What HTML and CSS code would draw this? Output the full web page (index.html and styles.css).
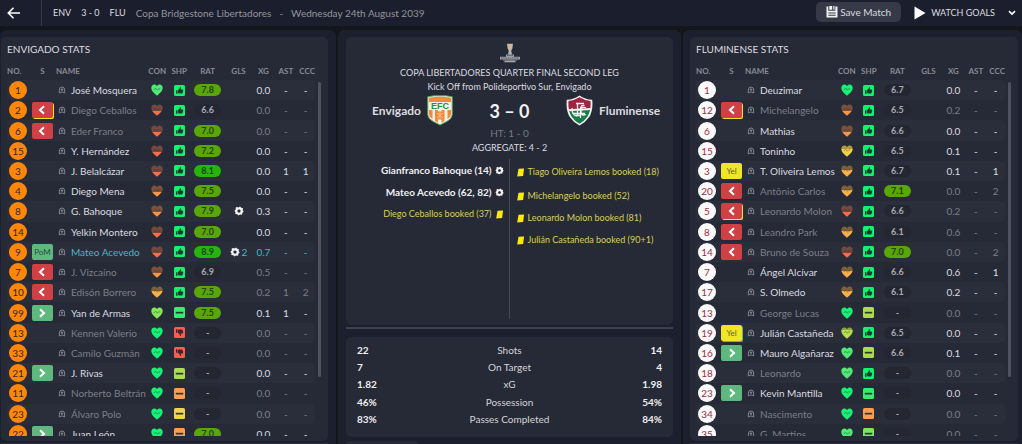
FILE: index.html
```html
<!DOCTYPE html>
<html lang="en">
<head>
<meta charset="utf-8">
<meta name="viewport" content="width=device-width, initial-scale=1">
<title>Envigado 3 - 0 Fluminense</title>
<link rel="stylesheet" href="styles.css">
</head>
<body>
<svg class="sprites" aria-hidden="true">
  <defs>
    <linearGradient id="fill-red" x1="0" y1="0" x2="0" y2="1"><stop offset=".6" stop-color="#72483f"/><stop offset=".6" stop-color="#fb6d49"/></linearGradient>
    <linearGradient id="fill-orange" x1="0" y1="0" x2="0" y2="1"><stop offset=".54" stop-color="#7a523c"/><stop offset=".54" stop-color="#fb9445"/></linearGradient>
    <linearGradient id="fill-amber" x1="0" y1="0" x2="0" y2="1"><stop offset=".42" stop-color="#7c6138"/><stop offset=".42" stop-color="#fbb047"/></linearGradient>
    <linearGradient id="fill-yellow" x1="0" y1="0" x2="0" y2="1"><stop offset=".3" stop-color="#b09a3a"/><stop offset=".3" stop-color="#f2d247"/></linearGradient>
    <linearGradient id="fill-lime" x1="0" y1="0" x2="0" y2="1"><stop offset=".25" stop-color="#8aa53f"/><stop offset=".25" stop-color="#b3df4c"/></linearGradient>
  </defs>
  <symbol id="heart" viewBox="0 0 12 12">
    <path d="M6 11.8C4.900 10.500.3 7.500.3 3.900.3 1.800 1.600.4 3.300.4 4.500.4 5.500 1.100 6 2.100 6.500 1.100 7.500.4 8.700.4c1.700 0 3 1.400 3 3.500C11.700 7.500 7.100 10.500 6 11.800z"/>
    <path d="M2.800 5.300h1l1-1 1.500 1.800 1.200-1.100h1.700" fill="none" stroke="#262936" stroke-opacity=".55" stroke-width=".8"/>
  </symbol>
  <symbol id="up" viewBox="0 0 11 11">
    <rect width="11" height="11" rx="1.500"/>
    <path fill="#1b3a35" d="M2 5.200h1.500v3.500H2zM4 5l1.600-1.200.4-1.900c.9-.1 1.300.7 1 1.500l-.3 1.100h1.800c.9 0 .8 1 .4 1.100.5.300.300 1-.1 1.100.3.400.1.900-.4 1 .1.600-.3.900-.8.900H5.200L4 8.100z"/>
  </symbol>
  <symbol id="down" viewBox="0 0 11 11">
    <rect width="11" height="11" rx="1.500"/>
    <path fill="#3a2530" d="M2 5.800h1.500V2.300H2zM4 6l1.600 1.200.4 1.900c.9.100 1.300-.7 1-1.500l-.3-1.100h1.800c.9 0 .8-1 .4-1.100.5-.3.3-1-.1-1.100.3-.4.1-.9-.4-1 .1-.6-.3-.9-.8-.9H5.200L4 2.900z"/>
  </symbol>
  <symbol id="minus" viewBox="0 0 11 11">
    <rect width="11" height="11" rx="1.500"/>
    <path fill="#2b3238" d="M1.800 4.800h7.400v1.700H1.800z"/>
  </symbol>
  <symbol id="person" viewBox="0 0 8 8">
    <path fill="none" stroke="#82848d" d="M1.300 7V4a2.700 3 0 0 1 5.400 0v3"/>
    <circle cx="4" cy="3.600" r="1.200" fill="#82848d"/>
    <path fill="#82848d" d="M1 7.400C1.200 6.200 2.600 5.400 4 5.400s2.800.8 3 2L5.200 6.700 4 6.500l-1.200.2z"/>
  </symbol>
  <symbol id="ball" viewBox="0 0 10 10">
    <path fill="#f0f0f2" d="M3 1.100 4.400 1.600 6.100.6 7.200 1.700 9 2.200 8.700 4.200 9.700 5.600 8.400 6.800 8.100 8.700 6 8.400 4.500 9.500 3.300 8.200 1.200 8 1.500 6.200.4 4.700 1.700 3.400 1.700 1.400z"/>
    <path fill="#262936" d="m5 3.200 1.700 1.300-.6 1.900H3.900l-.6-1.900z"/>
  </symbol>
  <symbol id="card" viewBox="0 0 8 9">
    <path fill="#fbe90c" d="M2 .7 7.600.4 6.600 7.900 .7 8.500z"/>
  </symbol>
  <symbol id="left" viewBox="0 0 10 10"><path d="M7 1.300 3 5 7 8.700" fill="none" stroke="#fff" stroke-width="2"/></symbol>
  <symbol id="right" viewBox="0 0 10 10"><path d="M3 1.300 7 5 3 8.700" fill="none" stroke="#fff" stroke-width="2"/></symbol>
</svg>

<header class="topbar">
  <button class="back" type="button" aria-label="Back">
    <svg width="14" height="12" viewBox="0 0 14 12" fill="none" stroke="#fff" stroke-width="1.600"><path d="M13 6H1.500M6.500.8 1.300 6l5.200 5.200"/></svg>
  </button>
  <div class="result"><span>ENV</span><span>3 - 0</span><span>FLU</span></div>
  <div class="meta"><span>Copa Bridgestone Libertadores</span><span>-</span><span>Wednesday 24th August 2039</span></div>
  <button class="save" type="button">
    <svg width="12" height="12" viewBox="0 0 12 12"><path fill="#f1f1f3" d="M.5.500h1.800v4.300h7V.5h2.200v11H.5z"/><path fill="#f1f1f3" d="M3.300 0h2.900v3.800H3.300zM7.300 0h1.200v3.800H7.300z"/><path fill="#393c49" d="M2.300 6.500h7.400v1H2.300zM2.300 8.700h7.400v1H2.300z"/></svg>
    Save Match
  </button>
  <button class="watch" type="button">
    <svg width="12" height="14" viewBox="0 0 12 14"><path fill="#fff" d="M.5.500 11.500 7 .5 13.500z"/></svg>
    <span>WATCH GOALS</span>
    <svg width="8" height="6" viewBox="0 0 8 6"><path d="m1 1.200 3 2.800 3-2.800" fill="none" stroke="#fff" stroke-width="1.700"/></svg>
  </button>
</header>

<main class="board">
  <section class="panel home">
    <div class="box">
      <h2>ENVIGADO STATS</h2>
      <div class="scroller"><table class="players" id="home-players"></table><i class="thumb"></i></div>
    </div>
    <div class="next"></div>
  </section>

  <section class="panel centre">
    <div class="box match">
      <svg class="trophy" width="22" height="20" viewBox="0 0 22 20">
        <path fill="#b9bac0" d="M8 .8h6l-.6 4.700-1.200 2.200.8 3.700H9l.8-3.700-1.200-2.200z"/>
        <path fill="#e6b467" d="M9.800 1.600h2.600l-.3 4.600h-2z"/>
        <path fill="#9fa1aa" d="M7 11.400h8v2.300H7zM1 13.700h20v2.700H1z"/>
        <path fill="#777a86" d="M4 16.400h14v1.200H4z"/><path fill="#a5a7b0" d="M5.500 17.600h11v1.700h-11z"/>
        <path stroke="#363945" stroke-width=".7" stroke-dasharray="1.500 .7" d="M2 15h18M8 12.500h6"/>
      </svg>
      <p class="round">COPA LIBERTADORES QUARTER FINAL SECOND LEG</p>
      <p class="venue">Kick Off from Polideportivo Sur, Envigado</p>
      <div class="teams">
        <div class="team team-home"><strong>Envigado</strong>
          <svg width="26" height="31" viewBox="0 0 26 31">
            <path fill="#f4f2e6" stroke="#53a65b" d="M.8 1.800Q7 .2 13 .8q6-.6 12.200 1V20q-.5 4.200-5.500 6.500L13 30l-6.700-3.500Q1.300 24.200.8 20z"/>
            <path fill="#f08a3c" d="M2 2.800Q13 .5 24 2.800V7H2zM2 15h3.500v9Q2.300 22.500 2 19.500zM8 15h3v12.500l-3-1.600zM14.500 15h3v11l-3 1.800zM20.500 15H24v4.500q-.3 3-3.500 4.500z"/>
            <circle cx="13" cy="20.500" r="4.300" fill="#f08a3c"/><path d="m10 18 6 5m0-5-6 5m3-7v9" stroke="#fbd0a0" stroke-width=".7"/>
            <text x="13" y="14" class="monogram" text-anchor="middle">EFC</text>
          </svg>
        </div>
        <div class="score">3 – 0</div>
        <div class="team">
          <svg width="27" height="31" viewBox="0 0 27 31">
            <clipPath id="flu"><path d="M2.500 6Q8 5.500 13.500 2.200 19 5.500 24.500 6q.8 9-3 15.500Q18.500 26 13.500 28.800 8.500 26 5.500 21.500 1.700 15 2.500 6z"/></clipPath>
            <path fill="#f4f1ef" d="M.8 4.800Q8 4.500 13.500.5 19 4.500 26.200 4.800q1.200 10.500-3.200 17.500Q19.500 27.500 13.500 30.500 7.500 27.500 4 22.300-.4 15.300.8 4.800z"/>
            <g clip-path="url(#flu)"><path fill="#9f2342" d="M0 0h27v15H0z"/><path fill="#187c4b" d="M0 15h27v16H0z"/><path fill="#f4f1ef" d="M0 14.300 27 13v2L0 16.300z"/></g>
            <path fill="none" stroke="#f4f1ef" stroke-width="1.300" d="M10 8.500h8M11.500 8.500v12M9 20.500h5M11.500 14.500H17M18.500 10.500q-4-1-4 4v8.500M20 13q-5-2.500-5 3t5 3.500M6 13q0 8 5 8M7 18.500h12"/>
          </svg>
          <strong>Fluminense</strong>
        </div>
      </div>
      <p class="half">HT: 1 - 0</p>
      <p class="aggregate">AGGREGATE: 4 - 2</p>
      <div class="events">
        <ul class="events-home">
          <li class="goal">Gianfranco Bahoque (14) <svg><use href="#ball"/></svg></li>
          <li class="goal">Mateo Acevedo (62, 82) <svg><use href="#ball"/></svg></li>
          <li class="booked">Diego Ceballos booked (37) <svg><use href="#card"/></svg></li>
        </ul>
        <ul class="events-away">
          <li class="booked"><svg><use href="#card"/></svg> Tiago Oliveira Lemos booked (18)</li>
          <li class="booked"><svg><use href="#card"/></svg> Michelangelo booked (52)</li>
          <li class="booked"><svg><use href="#card"/></svg> Leonardo Molon booked (81)</li>
          <li class="booked"><svg><use href="#card"/></svg> Julián Castañeda booked (90+1)</li>
        </ul>
      </div>
    </div>
    <div class="track"></div>
    <div class="box totals">
      <table>
        <tr><td>22</td><th scope="row">Shots</th><td>14</td></tr>
        <tr><td>7</td><th scope="row">On Target</th><td>4</td></tr>
        <tr><td>1.82</td><th scope="row">xG</th><td>1.98</td></tr>
        <tr><td>46%</td><th scope="row">Possession</th><td>54%</td></tr>
        <tr><td>83%</td><th scope="row">Passes Completed</th><td>84%</td></tr>
      </table>
    </div>
    <div class="tab"></div>
  </section>

  <section class="panel away">
    <div class="box">
      <h2>FLUMINENSE STATS</h2>
      <div class="scroller"><table class="players" id="away-players"></table><i class="thumb"></i></div>
    </div>
    <div class="next"></div>
  </section>
</main>
<script src="players.js"></script>
</body>
</html>
```
FILE: styles.css
```css
* { box-sizing: border-box; }

body {
  margin: 0;
  height: 100vh;
  display: flex;
  flex-direction: column;
  overflow: hidden;
  background: #15161a;
  color: #dcdde0;
  font: 10px/14px Lato, "Open Sans", sans-serif;
}

h2, p, ul { margin: 0; padding: 0; font-weight: 400; }
ul { list-style: none; }
button { border: 0; padding: 0; background: none; color: inherit; font: inherit; display: flex; align-items: center; }
table { border-collapse: collapse; }
th, td { padding: 0; }
.sprites { position: absolute; width: 0; height: 0; }

.topbar {
  flex: none;
  display: flex;
  align-items: center;
  height: 26px;
  padding-right: 6px;
  background: #1b1e2c;
}
.back { align-self: stretch; width: 42px; padding-left: 7px; border-right: 1px solid #343744; }
.result { display: flex; gap: 10px; padding-left: 11px; font-size: 9px; }
.meta { display: flex; gap: 8px; padding-left: 10px; margin-right: auto; color: #93959e; white-space: nowrap; }
.save { height: 20px; padding: 0 10px; gap: 2px; margin-right: 13px; margin-bottom: 3px; border-radius: 5px; background: #363946; }
.watch { gap: 5px; font-size: 9px; }
.watch span { margin-right: 8px; }

.board {
  flex: 1;
  min-height: 0;
  margin-top: 4px;
  display: grid;
  grid-template-columns: 336fr 343fr 339fr;
  grid-template-rows: minmax(0, 1fr);
  gap: 2px;
}
.panel {
  min-width: 0;
  display: flex;
  flex-direction: column;
  padding-top: 7px;
  border-radius: 6px 6px 0 0;
  background: #1c1f2e;
}
.home { padding-left: 1px; padding-right: 8px; }
.centre { padding-left: 8px; padding-right: 8px; }
.away { padding-left: 7px; padding-right: 4px; }
.box { border-radius: 5px; background: #262936; }
.home .box, .away .box {
  flex: 1;
  min-height: 0;
  display: flex;
  flex-direction: column;
  padding: 5px 0 5px 6px;
}
.next { flex: none; height: 1px; margin-top: 2px; background: #2d303d; }
h2 { font-size: 10px; }

.scroller { flex: 1; min-height: 0; display: flex; margin-top: 5px; overflow: hidden; }
.thumb { flex: none; width: 3px; height: 295px; margin: 21px 7px 0 3px; border-radius: 2px; background: #50535f; }

.players { flex: 1; height: 383px; table-layout: fixed; }
.players thead { height: 19px; }
.players th { height: 19px; font-size: 8px; line-height: 10px; font-weight: 700; color: #888b95; white-space: nowrap; }
.players td { text-align: center; color: #dcdde0; line-height: 14px; white-space: nowrap; }
.players tbody tr:nth-child(odd) td { background: #2a2d3a; }
.players tbody td:first-child { border-radius: 4px 0 0 4px; }
.players tbody td:last-child { border-radius: 0 4px 4px 0; }
.players svg { display: block; margin: auto; }
.col-no { width: 22px; }
.col-s { width: 27px; }
.col-con { width: 23px; }
.col-shp { width: 21px; }
.col-rat { width: 36px; }
.col-gls { width: 26px; }
.col-xg { width: 24px; }
.col-ast { width: 21px; }
.col-ccc { width: 18px; }
.players th:first-child, .players th:nth-child(3) { text-align: left; }
.players th:last-child { text-align: left; text-indent: 3px; }
.players .dim td { color: #7c7f88; }
.players .star td { color: #46b9c4; }

.no {
  display: block;
  width: 18px;
  height: 18px;
  margin-left: 2px;
  border-radius: 50%;
  line-height: 18px;
  background: #ff8708;
  color: #33262f;
}
.away .no { background: #fafafa; color: #a52b3c; }

.status {
  display: flex;
  align-items: center;
  justify-content: center;
  width: 21px;
  height: 16px;
  margin-left: 3px;
  border-radius: 2px;
  font-size: 8px;
}
.status svg { width: 10px; height: 10px; margin: 0; }
.off { background: #d04145; }
.on { background: #5fb97e; }
.pom { background: #5fb97e; color: #2c4a46; }
.yel { background: #f0e527; color: #635f2a; }
.under-yellow { box-shadow: 1px 1px 0 #f0e527; }
.under-green { box-shadow: 1px 1px 0 #5fb97e; }

.name { display: flex; align-items: center; gap: 5px; padding-left: 2px; }
.players .name svg { flex: none; width: 8px; height: 8px; margin: 0; }
.heart { width: 12px; height: 12px; }
.sharp { width: 11px; height: 11px; }

.rating {
  display: block;
  width: 27px;
  height: 12px;
  margin: auto;
  border-radius: 6px;
  font-size: 9px;
  font-weight: 700;
  line-height: 12px;
  background: #242731;
  color: #a9abb2;
}
.good { background: #58a607; color: #26400f; }
.great { background: #26b50a; color: #174413; }
.goals { display: flex; align-items: center; justify-content: center; gap: 2px; }
.players .goals svg { width: 10px; height: 10px; margin: 0; }

.match { flex: 1; min-height: 0; display: flex; flex-direction: column; padding: 6px 0 6px; text-align: center; }
.trophy { flex: none; align-self: center; margin-bottom: 3px; }
.round, .venue { font-size: 9px; }
.teams { display: grid; grid-template-columns: minmax(0, 1fr) 113px minmax(0, 1fr); align-items: center; margin-top: 1px; }
.team { display: flex; align-items: center; gap: 6px; }
.team-home { justify-content: flex-end; }
.team strong { font-size: 12px; }
.team svg { flex: none; }
.monogram { font: 700 9px "Liberation Sans", sans-serif; fill: #278f48; }
.score { font-size: 18px; line-height: 24px; font-weight: 700; color: #f2f2f4; }
.half { color: #777a84; }
.aggregate { margin: 1px 0 4px; font-size: 9px; }
.events { flex: 1; display: grid; grid-template-columns: minmax(0, 1fr) minmax(0, 1fr); white-space: nowrap; }
.events li { display: flex; align-items: center; height: 22px; gap: 3px; }
.events svg { flex: none; width: 9px; height: 9px; }
.events-home { border-right: 1px solid #464955; padding-right: 5px; }
.events-home li { justify-content: flex-end; }
.events-away { padding: 2px 0 0 6px; }
.events-away li:first-child { margin-bottom: 2px; }
.goal { font-weight: 700; color: #f0f0f2; }
.booked { color: #d8cf62; font-size: 9px; }
.track { flex: none; height: 2px; margin: 2px 0 8px; background: #3d404c; }

.totals { flex: none; padding: 4px 11px 9px; }
.totals table { width: 100%; height: 87px; table-layout: fixed; }
.totals th { font-weight: 400; text-align: center; color: #d4d5d9; }
.totals td { width: 40px; font-weight: 700; color: #eeeef0; }
.totals td:last-child { text-align: right; }
.tab { flex: none; width: 22%; height: 3px; margin-top: 4px; border-radius: 3px 3px 0 0; background: #262936; }
```
FILE: players.js
```js
const HEARTS = {
  green: '#18f076', mint: '#4fe974', leaf: '#86e558',
  lime: 'url(#fill-lime)', yellow: 'url(#fill-yellow)', amber: 'url(#fill-amber)',
  orange: 'url(#fill-orange)', red: 'url(#fill-red)'
};
const SHARPNESS = {
  up: ['up', '#10f56d'], down: ['down', '#ff5a50'], flat: ['minus', '#35ee70'], leaf: ['minus', '#7be85a'],
  lime: ['minus', '#abdc50'], yellow: ['minus', '#f2d34d'], orange: ['minus', '#ff9c4f']
};

// number, status, name, heart, sharpness, rating, goals, xG, assists, chances, row style
const home = [
  [1, '', 'José Mosquera', 'mint', 'up', '7.8', 0, '0.0', '-', '-', ''],
  [2, 'off under-yellow', 'Diego Ceballos', 'red', 'up', '6.6', 0, '0.0', '-', '-', 'dim'],
  [6, 'off', 'Eder Franco', 'red', 'up', '7.0', 0, '0.0', '-', '-', 'dim'],
  [15, '', 'Y. Hernández', 'red', 'up', '7.2', 0, '0.0', '-', '-', ''],
  [3, '', 'J. Belalcázar', 'red', 'up', '8.1', 0, '0.0', '1', '1', ''],
  [4, '', 'Diego Mena', 'orange', 'up', '7.5', 0, '0.0', '-', '-', ''],
  [8, '', 'G. Bahoque', 'orange', 'up', '7.9', 1, '0.3', '-', '-', ''],
  [14, '', 'Yelkin Montero', 'red', 'up', '7.0', 0, '0.0', '-', '-', ''],
  [9, 'pom', 'Mateo Acevedo', 'red', 'up', '8.9', 2, '0.7', '-', '-', 'star'],
  [7, 'off', 'J. Vizcaíno', 'orange', 'up', '6.9', 0, '0.5', '-', '-', 'dim'],
  [10, 'off', 'Edisón Borrero', 'amber', 'up', '7.5', 0, '0.2', '1', '2', 'dim'],
  [99, 'on', 'Yan de Armas', 'leaf', 'flat', '7.5', 0, '0.1', '1', '-', ''],
  [13, '', 'Kennen Valerio', 'green', 'down', '-', 0, '0.0', '-', '-', 'dim'],
  [33, '', 'Camilo Guzmán', 'green', 'down', '-', 0, '0.0', '-', '-', 'dim'],
  [21, 'on', 'J. Rivas', 'green', 'lime', '-', 0, '0.0', '-', '-', ''],
  [11, '', 'Norberto Beltrán', 'green', 'orange', '-', 0, '0.0', '-', '-', 'dim'],
  [23, '', 'Álvaro Polo', 'green', 'yellow', '-', 0, '0.0', '-', '-', 'dim'],
  [22, 'on', 'Juan León', 'green', 'orange', '7.0', 0, '0.0', '-', '-', '']
];
const away = [
  [1, '', 'Deuzimar', 'green', 'up', '6.7', 0, '0.0', '-', '-', ''],
  [12, 'off under-yellow', 'Michelangelo', 'orange', 'up', '6.5', 0, '0.2', '-', '-', 'dim'],
  [6, '', 'Mathias', 'orange', 'up', '6.6', 0, '0.0', '-', '-', ''],
  [15, '', 'Toninho', 'yellow', 'up', '6.5', 0, '0.1', '-', '-', ''],
  [3, 'yel', 'T. Oliveira Lemos', 'amber', 'up', '6.7', 0, '0.1', '-', '1', ''],
  [20, 'off', 'Antônio Carlos', 'amber', 'up', '7.1', 0, '0.0', '-', '2', 'dim'],
  [5, 'off under-yellow', 'Leonardo Molon', 'red', 'up', '6.6', 0, '0.2', '-', '-', 'dim'],
  [8, 'off', 'Leandro Park', 'amber', 'up', '6.1', 0, '0.6', '-', '-', 'dim'],
  [14, 'off', 'Bruno de Souza', 'red', 'up', '7.0', 0, '0.0', '-', '2', 'dim'],
  [7, '', 'Ángel Alcívar', 'amber', 'up', '6.6', 0, '0.6', '-', '1', ''],
  [17, '', 'S. Olmedo', 'amber', 'up', '6.1', 0, '0.2', '-', '-', ''],
  [13, '', 'George Lucas', 'green', 'lime', '-', 0, '0.0', '-', '-', 'dim'],
  [19, 'yel under-green', 'Julián Castañeda', 'lime', 'up', '6.5', 0, '0.0', '-', '-', ''],
  [16, 'on', 'Mauro Algañaraz', 'mint', 'lime', '6.6', 0, '0.1', '-', '-', ''],
  [18, '', 'Leonardo', 'mint', 'up', '-', 0, '0.0', '-', '-', 'dim'],
  [23, 'on', 'Kevin Mantilla', 'green', 'flat', '-', 0, '0.0', '-', '-', ''],
  [34, '', 'Nascimento', 'green', 'orange', '-', 0, '0.0', '-', '-', 'dim'],
  [35, '', 'G. Martins', 'mint', 'leaf', '-', 0, '0.0', '-', '-', 'dim']
];

const icon = (id, cls = '', fill = '') => `<svg class="${cls}" fill="${fill}"><use href="#${id}"/></svg>`;

function status(kind) {
  if (!kind) return '';
  const content = { off: icon('left'), on: icon('right'), pom: 'PoM', yel: 'Yel' }[kind.split(' ')[0]];
  return `<span class="status ${kind}">${content}</span>`;
}

function rating(value) {
  const score = parseFloat(value) || 0;
  return `<span class="rating ${score >= 8 ? 'great' : score >= 7 ? 'good' : ''}">${value}</span>`;
}

function goals(count) {
  return count ? `<span class="goals">${icon('ball')}${count > 1 ? count : ''}</span>` : '';
}

function row([no, st, name, heart, sharp, rat, gls, xg, ast, ccc, style]) {
  const [shape, colour] = SHARPNESS[sharp];
  return `<tr class="${style}"><td><span class="no">${no}</span></td><td>${status(st)}</td>
    <td><span class="name">${icon('person')}${name}</span></td>
    <td>${icon('heart', 'heart', HEARTS[heart])}</td><td>${icon(shape, 'sharp', colour)}</td>
    <td>${rating(rat)}</td><td>${goals(gls)}</td><td>${xg}</td><td>${ast}</td><td>${ccc}</td></tr>`;
}

const columns = [['no', 'NO.'], ['s', 'S'], ['name', 'NAME'], ['con', 'CON'], ['shp', 'SHP'],
  ['rat', 'RAT'], ['gls', 'GLS'], ['xg', 'XG'], ['ast', 'AST'], ['ccc', 'CCC']];
const head = columns.map(([key, label]) => `<th class="col-${key}" scope="col">${label}</th>`).join('');

for (const [id, players] of [['home-players', home], ['away-players', away]]) {
  document.getElementById(id).innerHTML =
    `<thead><tr>${head}</tr></thead><tbody>${players.map(row).join('')}</tbody>`;
}
```
